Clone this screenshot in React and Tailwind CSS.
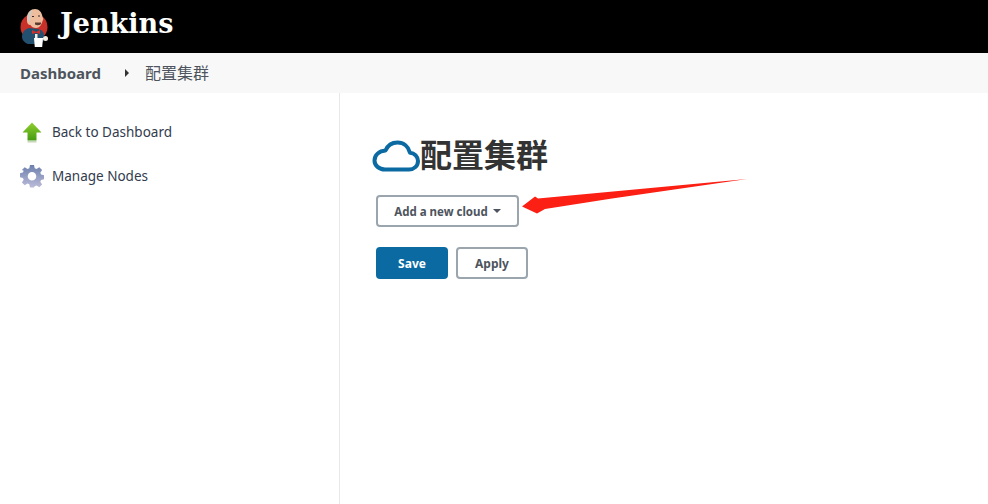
const sans = { fontFamily: '"Noto Sans", "Noto Sans CJK SC", sans-serif' };

const JenkinsLogo = () => (
  <svg width="32" height="40" viewBox="0 0 32 40" className="shrink-0">
    <circle cx="15" cy="20" r="13.500" fill="#c8302a" />
    {/* coat */}
    <path d="M3 30c0-5 3-8 7-9l9 1c4 1 6 3 6 7l-1 6-4 2H9c-3-1-6-4-6-7z" fill="#24506f" />
    {/* head */}
    <path d="M8 11C8 5 12 2 16 2s7 3 7.500 8c1 1 1 3 0 4-1 4-3 7-6.500 7-2.500 0-4.500-1-5.500-3C9 18 8 16 8 14z" fill="#edbd9e" />
    <path d="M8 11c.5-4 2.500-7 6-8.500-2 3-2.500 6-2.500 9.500L10 15c-1-1-2-2-2-4z" fill="#cfccc6" />
    <path d="M16 15.500h6v1.500c-1.500 1.500-4 1.500-6 .5z" fill="#5a3a30" />
    <path d="M13 9.500h2M19 9h2" stroke="#3a2a25" strokeWidth="1" />
    {/* bow tie */}
    <path d="M13 23l4 2 4-2v4l-4-1.300-4 1.300z" fill="#d3302a" />
    <path d="M16 27h2.500v5H16z" fill="#f3ede4" />
    {/* apron and hand */}
    <path d="M15 31h9l-.8 9h-7.400z" fill="#fff" />
    <circle cx="26.500" cy="31.500" r="2.500" fill="#f3ede4" />
  </svg>
);

const UpArrowIcon = () => (
  <svg width="24" height="24" viewBox="0 0 24 24" className="shrink-0">
    <defs>
      <linearGradient id="upGreen" x1="0" y1="0" x2="0" y2="1">
        <stop offset="0" stopColor="#8fd02f" />
        <stop offset="1" stopColor="#459a12" />
      </linearGradient>
    </defs>
    <path d="M12 2.500l9.500 10h-5V20.500h-9V12.500h-5z" fill="url(#upGreen)" />
    <path d="M7.500 21h9v1.500h-9z" fill="#c9d6bc" />
  </svg>
);

const GearIcon = () => (
  <svg width="24" height="24" viewBox="0 0 24 24" className="shrink-0">
    <defs>
      <linearGradient id="gearFill" x1="0" y1="0" x2="0" y2="1">
        <stop offset="0" stopColor="#6c80ad" />
        <stop offset="1" stopColor="#bcbbd8" />
      </linearGradient>
    </defs>
    <path
      fillRule="evenodd"
      d="M10 1h4l.7 3.200 1.800.8 2.800-1.800 2.800 2.800-1.800 2.800.8 1.800 3 .6v4l-3 .7-.8 1.800 1.800 2.800-2.800 2.800-2.800-1.800-1.800.8L14 23.500h-4l-.7-3.200-1.800-.8-2.800 1.800-2.800-2.800 1.800-2.800-.8-1.800-3-.7v-4l3-.6.8-1.800L1.900 6l2.800-2.800L7.500 5l1.800-.8zM12 8a4.300 4.300 0 1 0 0 8.600A4.300 4.300 0 0 0 12 8z"
      fill="url(#gearFill)"
    />
  </svg>
);

const CloudIcon = () => (
  <svg width="48" height="32" viewBox="0 0 48 32" className="shrink-0">
    <path
      d="M13 29.500h24c5 0 9-3.500 9-8.500 0-4.500-3.500-8-8-8.300C36.500 6.500 31.500 2.500 25.500 2.500c-5.500 0-10 3.300-12 8C7 11 2.500 15 2.500 20.500c0 5 4.500 9 10.500 9z"
      fill="none"
      stroke="#0b6aa2"
      strokeWidth="4"
      strokeLinejoin="round"
    />
  </svg>
);

export default function App() {
  return (
    <div className="h-[504px] w-[988px] overflow-hidden relative flex flex-col bg-white" style={sans}>
      {/* Header */}
      <div className="h-[53px] bg-black flex items-center pl-[19px] gap-[9px] shrink-0">
        <JenkinsLogo />
        <span className="text-white font-bold text-[27px] leading-none pb-[6px] font-['DejaVu_Serif',serif]">
          Jenkins
        </span>
      </div>

      {/* Breadcrumb */}
      <div className="h-[40px] bg-[#f8f8f8] flex items-center pl-[20px] shrink-0">
        <span className="text-[15px] font-bold text-[#4d545d] w-[105px]">Dashboard</span>
        <span className="w-0 h-0 border-y-[4px] border-y-transparent border-l-[4px] border-l-[#333]"></span>
        <span className="ml-[16px] text-[16px] text-[#4d545d]">配置集群</span>
      </div>

      <div className="flex flex-1 min-h-0">
        {/* Sidebar */}
        <div className="w-[340px] border-r border-[#e8e8e8] pt-[27px] pl-[20px] flex flex-col gap-[20px] shrink-0">
          <div className="flex items-center gap-[8px] h-[24px] text-[13.5px] text-[#333b4d]">
            <UpArrowIcon />
            <span>Back to Dashboard</span>
          </div>
          <div className="flex items-center gap-[8px] h-[24px] text-[13.5px] text-[#333b4d]">
            <GearIcon />
            <span>Manage Nodes</span>
          </div>
        </div>

        {/* Main */}
        <div className="flex-1 pl-[32px] pt-[45px]">
          <div className="flex items-center h-[36px]">
            <CloudIcon />
            <h1 className="text-[32px] font-bold text-[#333] leading-none pb-[2px]">配置集群</h1>
          </div>
          <div className="pl-[4px] mt-[21px] flex flex-col items-start gap-[20px]">
            <button className="w-[143px] h-[32px] border-2 border-[#9aa5ae] rounded-[4px] flex items-center justify-center gap-[5px] pt-[2px] text-[11.5px] font-bold text-[#4d545d]">
              Add a new cloud
              <span className="w-0 h-0 mb-[2px] border-x-[4px] border-x-transparent border-t-[4px] border-t-[#4d545d]"></span>
            </button>
            <div className="flex gap-[8px]">
              <button className="w-[72px] h-[32px] pt-[2px] bg-[#0b6aa2] rounded-[4px] text-[12px] font-bold text-white">
                Save
              </button>
              <button className="w-[72px] h-[32px] pt-[2px] border-2 border-[#9aa5ae] rounded-[4px] text-[12px] font-bold text-[#4d545d]">
                Apply
              </button>
            </div>
          </div>
        </div>
      </div>

      {/* Red annotation arrow */}
      <svg width="988" height="504" className="absolute left-0 top-0 pointer-events-none">
        <path d="M522 206.500L535 196.500L538 198.500L747 179L612 198.500L545 209L537 213.500Z" fill="#fb1f14" />
      </svg>
    </div>
  );
}
